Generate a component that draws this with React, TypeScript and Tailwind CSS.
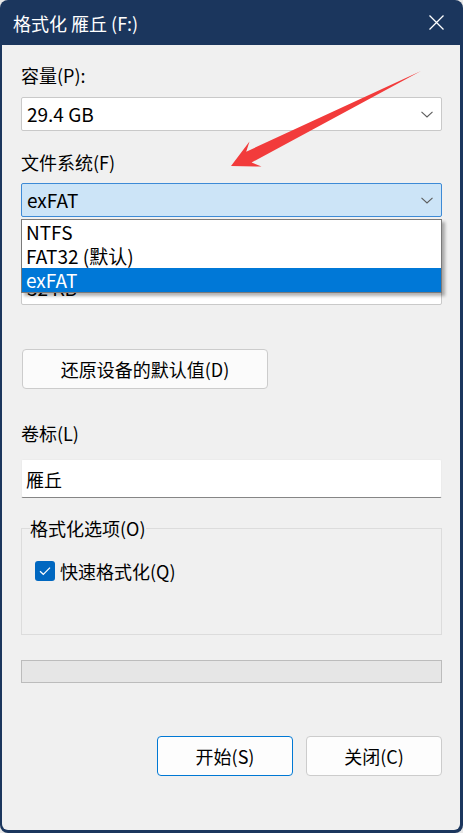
import React from "react";

function Chevron() {
  return (
    <svg width="12" height="7" viewBox="0 0 12 7" className="shrink-0">
      <polyline points="0.5,0.8 6,6 11.5,0.8" fill="none" stroke="#5c5c5c" strokeWidth="1.1" />
    </svg>
  );
}

function Combo({ value, active }: { value: string; active?: boolean }) {
  return (
    <div
      className={
        active
          ? "h-[34px] flex items-center justify-between pl-[5px] pr-[8px] border border-[#3d8ad6] bg-[#cce4f7] rounded-[2px]"
          : "h-[34px] flex items-center justify-between pl-[5px] pr-[8px] border border-[#c9c9c9] bg-white rounded-[2px]"
      }
    >
      <span className="text-[19px] leading-[24px] text-black">{value}</span>
      <Chevron />
    </div>
  );
}

export default function App() {
  return (
    <div className="w-[463px] h-[833px] bg-[#e8e8e8] font-['Noto_Sans_CJK_SC','Noto_Sans',sans-serif]">
      <div className="relative w-[463px] h-[833px] bg-[#1b365d] rounded-[8px] flex flex-col">
        <div className="h-[45px] shrink-0 flex items-center justify-between pl-[13px] pr-[19px]">
          <span className="text-white text-[18px] leading-[24px]">格式化 雁丘 (F:)</span>
          <svg width="15" height="15" viewBox="0 0 15 15">
            <path d="M0.5 0.5 L14.5 14.5 M14.5 0.5 L0.5 14.5" stroke="white" strokeWidth="1.3" />
          </svg>
        </div>
        <div className="flex-1 ml-[2px] mr-[3px] mb-[3px] bg-[#f0f0f0] rounded-b-[6px] pl-[19px] pr-[18px] pt-[18px] flex flex-col text-black text-[18px] leading-[24px]">
          <div>容量(P):</div>
          <div className="mt-[10px]">
            <Combo value="29.4 GB" />
          </div>
          <div className="mt-[19px]">文件系统(F)</div>
          <div className="mt-[9px] relative">
            <Combo value="exFAT" active />
            <div className="absolute left-0 right-0 top-[36px] z-10 border border-[#7a7a7a] bg-white shadow-[3px_3px_3px_rgba(0,0,0,0.3)]">
              <div className="h-[24px] flex items-center pl-[4px] text-[19px]">NTFS</div>
              <div className="h-[24px] flex items-center pl-[4px] text-[19px]">FAT32 (默认)</div>
              <div className="h-[24px] flex items-center pl-[4px] text-[19px] bg-[#0078d7] text-white">exFAT</div>
            </div>
          </div>
          <div className="mt-[20px]">分配单元大小(A)</div>
          <div className="mt-[10px]">
            <Combo value="32 KB" />
          </div>
          <button className="mt-[44px] ml-[1px] w-[246px] h-[40px] border border-[#cccccc] bg-[#fbfbfb] rounded-[4px] text-[18px] leading-[24px] text-black">
            还原设备的默认值(D)
          </button>
          <div className="mt-[32px]">卷标(L)</div>
          <div className="mt-[14px] h-[39px] bg-white border border-[#ececec] border-b-[#868686] rounded-[2px] flex items-center pl-[4px]">
            雁丘
          </div>
          <fieldset className="mt-[18px] border border-[#dcdcdc] px-[8px] pb-[51px]">
            <legend className="px-0 leading-[24px]">格式化选项(O)</legend>
            <div className="mt-[19px] ml-[5px] flex items-center gap-[5px] h-[24px]">
              <span className="w-[20px] h-[20px] rounded-[3px] bg-[#0067c0] flex items-center justify-center">
                <svg width="20" height="20" viewBox="0 0 20 20">
                  <polyline points="5,10.2 8.3,13.3 15,6.6" fill="none" stroke="white" strokeWidth="1.2" />
                </svg>
              </span>
              <span>快速格式化(Q)</span>
            </div>
          </fieldset>
          <div className="mt-[25px] h-[23px] bg-[#e6e6e6] border border-[#bcbcbc]"></div>
          <div className="mt-[53px] flex justify-end gap-[13px]">
            <button className="w-[136px] h-[40px] border border-[#0078d4] bg-[#fdfdfd] rounded-[4px] text-[18px] leading-[24px] text-black">
              开始(S)
            </button>
            <button className="w-[136px] h-[40px] border border-[#cccccc] bg-[#fdfdfd] rounded-[4px] text-[18px] leading-[24px] text-black">
              关闭(C)
            </button>
          </div>
        </div>
        <svg className="absolute inset-0 pointer-events-none z-20" width="463" height="833" viewBox="0 0 463 833">
          <polygon
            points="421,71 251.6,162.5 261.5,166.5 231,166 249.5,141.5 246.2,151.7"
            fill="#f23b3b"
          />
        </svg>
      </div>
    </div>
  );
}
